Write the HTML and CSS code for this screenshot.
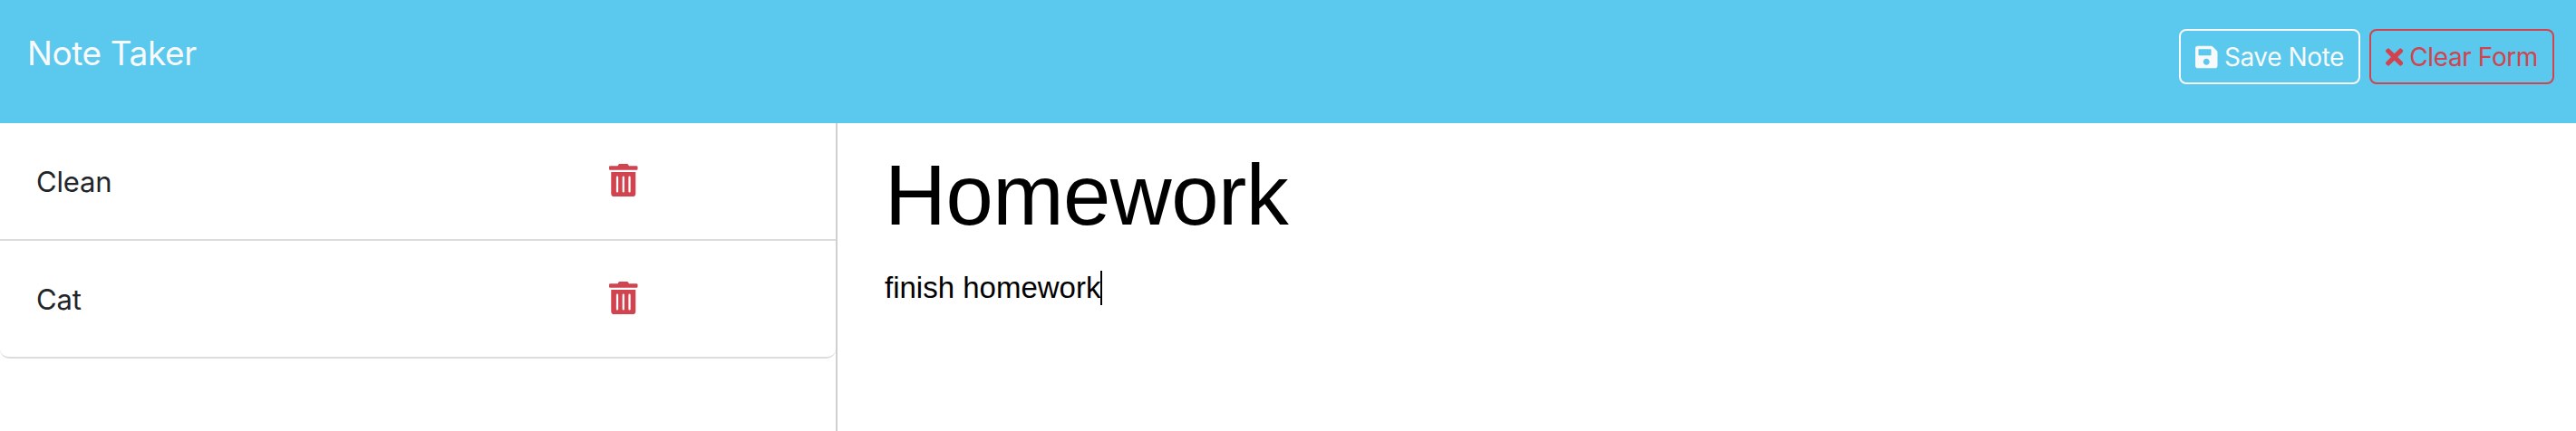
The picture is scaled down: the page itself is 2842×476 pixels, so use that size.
FILE: index.html
```html
<!DOCTYPE html>
<html lang="en">
<head>
    <meta charset="UTF-8">
    <meta name="viewport" content="width=device-width, initial-scale=1.0">
    <title>Note Taker</title>
    <link rel="stylesheet" href="styles.css">
</head>
<body>
    <nav class="navbar">
        <a class="brand">Note Taker</a>
        <div class="actions">
            <button class="btn btn-save">
                <svg class="icon" viewBox="0 0 448 512"><path d="M433.941 129.941l-83.882-83.882A48 48 0 0 0 316.118 32H48C21.49 32 0 53.49 0 80v352c0 26.51 21.49 48 48 48h352c26.51 0 48-21.49 48-48V163.882a48 48 0 0 0-14.059-33.941zM224 416c-35.346 0-64-28.654-64-64 0-35.346 28.654-64 64-64s64 28.654 64 64c0 35.346-28.654 64-64 64zm96-304.52V212c0 6.627-5.373 12-12 12H76c-6.627 0-12-5.373-12-12V108c0-6.627 5.373-12 12-12h228.52c3.183 0 6.235 1.264 8.485 3.515l3.48 3.48A11.996 11.996 0 0 1 320 111.48z"/></svg>
                Save Note
            </button>
            <button class="btn btn-clear">
                <svg class="icon" viewBox="0 0 352 512"><path d="M242.72 256l100.07-100.07c12.28-12.28 12.28-32.19 0-44.48l-22.24-22.24c-12.28-12.28-32.19-12.28-44.48 0L176 189.28 75.93 89.21c-12.28-12.28-32.19-12.28-44.48 0L9.21 111.45c-12.28 12.28-12.28 32.19 0 44.48L109.28 256 9.21 356.07c-12.28 12.28-12.28 32.19 0 44.48l22.24 22.24c12.28 12.28 32.2 12.28 44.48 0L176 322.72l100.07 100.07c12.28 12.28 32.2 12.28 44.48 0l22.24-22.24c12.28-12.28 12.28-32.19 0-44.48L242.72 256z"/></svg>
                Clear Form
            </button>
        </div>
    </nav>

    <main class="content">
        <ul class="note-list">
            <li class="note-item">
                <span class="note-title">Clean</span>
                <svg class="trash" viewBox="0 0 448 512"><path d="M32 464a48 48 0 0 0 48 48h288a48 48 0 0 0 48-48V128H32zm272-256a16 16 0 0 1 32 0v224a16 16 0 0 1-32 0zm-96 0a16 16 0 0 1 32 0v224a16 16 0 0 1-32 0zm-96 0a16 16 0 0 1 32 0v224a16 16 0 0 1-32 0zM432 32H312l-9.4-18.7A24 24 0 0 0 281.1 0H166.8a23.72 23.72 0 0 0-21.4 13.3L136 32H16A16 16 0 0 0 0 48v32a16 16 0 0 0 16 16h416a16 16 0 0 0 16-16V48a16 16 0 0 0-16-16z"/></svg>
            </li>
            <li class="note-item">
                <span class="note-title">Cat</span>
                <svg class="trash" viewBox="0 0 448 512"><path d="M32 464a48 48 0 0 0 48 48h288a48 48 0 0 0 48-48V128H32zm272-256a16 16 0 0 1 32 0v224a16 16 0 0 1-32 0zm-96 0a16 16 0 0 1 32 0v224a16 16 0 0 1-32 0zm-96 0a16 16 0 0 1 32 0v224a16 16 0 0 1-32 0zM432 32H312l-9.4-18.7A24 24 0 0 0 281.1 0H166.8a23.72 23.72 0 0 0-21.4 13.3L136 32H16A16 16 0 0 0 0 48v32a16 16 0 0 0 16 16h416a16 16 0 0 0 16-16V48a16 16 0 0 0-16-16z"/></svg>
            </li>
        </ul>
        <section class="editor">
            <h1 class="editor-title">Homework</h1>
            <p class="editor-text">finish homework<span class="caret"></span></p>
        </section>
    </main>
</body>
</html>
```

FILE: styles.css
```css
* {
    box-sizing: border-box;
}
body {
    margin: 0;
    height: 100vh;
    display: flex;
    flex-direction: column;
    background-color: white;
    font-family: Inter, Arial, sans-serif;
    overflow: hidden;
}
.navbar {
    height: 136px;
    flex-shrink: 0;
    display: flex;
    justify-content: space-between;
    align-items: flex-start;
    padding: 32px 24px 0 30px;
    background-color: #5bc8ed;
}
.brand {
    font-size: 37px;
    line-height: 54px;
    letter-spacing: -0.4px;
    color: #f8f9fa;
}
.actions {
    display: flex;
    gap: 10px;
}
.btn {
    height: 61px;
    display: flex;
    align-items: center;
    gap: 7px;
    padding: 0 16px;
    font-family: inherit;
    font-size: 28px;
    letter-spacing: -0.4px;
    background: none;
    border: 2px solid;
    border-radius: 8px;
}
.btn-save {
    color: #f8f9fa;
    border-color: #f8f9fa;
}
.btn-clear {
    color: #d1444f;
    border-color: #d1444f;
}
.icon {
    height: 28px;
    fill: currentColor;
}
.content {
    flex: 1;
    display: flex;
}
.note-list {
    width: 924px;
    margin: 0;
    padding: 0;
    list-style: none;
    border-right: 2px solid #d0d0d0;
}
.note-item {
    height: 130px;
    display: flex;
    align-items: center;
    padding-left: 40px;
    font-size: 31px;
    letter-spacing: -0.2px;
    color: #212529;
    border-bottom: 2px solid #dcdcdc;
}
.note-item:last-child {
    border-radius: 0 0 10px 10px;
}
.note-title {
    width: 632px;
}
.trash {
    height: 36px;
    margin-bottom: 3px;
    fill: #d1444f;
}
.editor {
    flex: 1;
    padding-left: 52px;
    font-family: "Liberation Sans", Arial, sans-serif;
    color: black;
}
.editor-title {
    margin: 28px 0 0;
    font-size: 94px;
    font-weight: normal;
    line-height: 104px;
    letter-spacing: -0.5px;
}
.editor-text {
    margin: 30px 0 0;
    font-size: 33px;
    line-height: 40px;
}
.caret {
    display: inline-block;
    width: 2px;
    height: 38px;
    vertical-align: -8px;
    background-color: black;
}
```
